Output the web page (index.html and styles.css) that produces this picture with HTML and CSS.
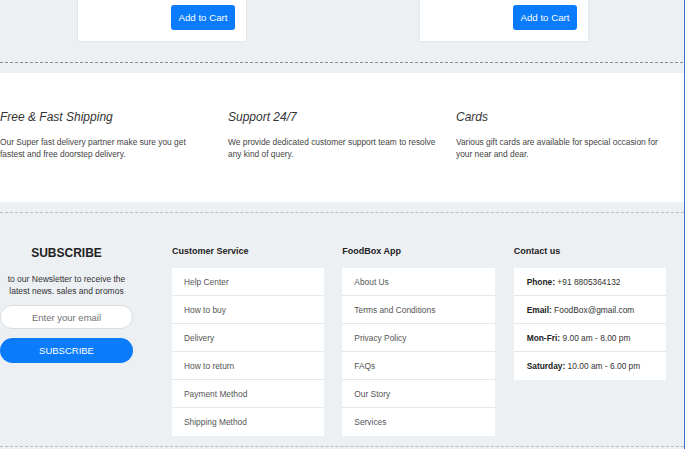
FILE: index.html
```html
<!DOCTYPE html>
<html lang="en">
<head>
<meta charset="utf-8">
<title>FoodBox</title>
<link rel="stylesheet" href="styles.css">
</head>
<body>
<div class="page">
  <section class="products">
    <div class="card"><button class="btn-cart">Add to Cart</button></div>
    <div class="card"><button class="btn-cart">Add to Cart</button></div>
  </section>
  <hr class="rule rule-dark">
  <section class="features">
    <div class="feature">
      <h3 class="feature-title">Free &amp; Fast Shipping</h3>
      <p class="feature-text">Our Super fast delivery partner make sure you get fastest and free doorstep delivery.</p>
    </div>
    <div class="feature">
      <h3 class="feature-title">Support 24/7</h3>
      <p class="feature-text">We provide dedicated customer support team to resolve any kind of query.</p>
    </div>
    <div class="feature">
      <h3 class="feature-title">Cards</h3>
      <p class="feature-text">Various gift cards are available for special occasion for your near and dear.</p>
    </div>
  </section>
  <hr class="rule rule-light">
  <footer class="footer">
    <div class="subscribe">
      <h2 class="subscribe-title">SUBSCRIBE</h2>
      <p class="subscribe-text">to our Newsletter to receive the latest news, sales and promos</p>
      <input class="subscribe-input" type="text" placeholder="Enter your email">
      <button class="subscribe-btn">SUBSCRIBE</button>
    </div>
    <div class="fcol">
      <h4 class="fcol-title">Customer Service</h4>
      <ul class="flist">
        <li>Help Center</li>
        <li>How to buy</li>
        <li>Delivery</li>
        <li>How to return</li>
        <li>Payment Method</li>
        <li>Shipping Method</li>
      </ul>
    </div>
    <div class="fcol">
      <h4 class="fcol-title">FoodBox App</h4>
      <ul class="flist">
        <li>About Us</li>
        <li>Terms and Conditions</li>
        <li>Privacy Policy</li>
        <li>FAQs</li>
        <li>Our Story</li>
        <li>Services</li>
      </ul>
    </div>
    <div class="fcol">
      <h4 class="fcol-title">Contact us</h4>
      <ul class="flist contact">
        <li><b>Phone:</b> +91 8805364132</li>
        <li><b>Email:</b> FoodBox@gmail.com</li>
        <li><b>Mon-Fri:</b> 9.00 am - 8.00 pm</li>
        <li><b>Saturday:</b> 10.00 am - 6.00 pm</li>
      </ul>
    </div>
  </footer>
  <hr class="rule rule-light">
</div>
</body>
</html>
```

FILE: styles.css
```css
* { box-sizing: border-box; }
html, body {
  margin: 0;
  padding: 0;
  background: #edf0f3;
  font-family: "Liberation Sans", Arial, sans-serif;
  color: #333;
}
.page {
  width: 685px;
  min-height: 449px;
  border-right: 1px solid #3a72c8;
  overflow: hidden;
}
.products {
  display: flex;
  gap: 172px;
  padding-left: 77px;
  height: 62px;
}
.card {
  width: 170px;
  height: 42px;
  background: #fff;
  border: 1px solid #e4e7ea;
  border-top: none;
  display: flex;
  justify-content: flex-end;
  align-items: flex-start;
  padding: 5px 11px 0 0;
}
.btn-cart {
  width: 64px;
  height: 25px;
  background: #0a7bfa;
  color: #fff;
  border: none;
  border-radius: 3px;
  font-family: "Liberation Sans", Arial, sans-serif;
  font-size: 9.7px;
  padding: 0;
}
.rule {
  margin: 0;
  border: none;
  height: 0;
}
.rule-dark {
  border-top: 1px dashed #8c8c8c;
  margin-bottom: 10px;
  margin-right: 1px;
}
.rule-light {
  border-top: 1px dashed #b9bdc2;
}
.features {
  background: #fff;
  height: 129px;
  display: grid;
  grid-template-columns: 228px 228px 228px;
  padding-top: 36px;
  margin-bottom: 10px;
}
.feature {
  padding-right: 17px;
}
.feature-title {
  margin: 0;
  font-size: 12px;
  line-height: 16px;
  font-style: italic;
  font-weight: normal;
  color: #333;
}
.feature-text {
  margin: 11px 0 0;
  font-size: 8.4px;
  line-height: 12px;
  color: #444;
}
.footer {
  display: flex;
  padding: 32px 0 10px 0;
}
.subscribe {
  width: 133px;
  margin-right: 39px;
  padding-top: 1px;
  display: flex;
  flex-direction: column;
  align-items: stretch;
  text-align: center;
}
.subscribe-title {
  margin: 0;
  font-size: 12px;
  line-height: 14px;
  font-weight: bold;
  color: #222;
}
.subscribe-text {
  margin: 13px 0 0;
  font-size: 8.5px;
  line-height: 12px;
  height: 21px;
  overflow: hidden;
  color: #333;
}
.subscribe-input {
  margin-top: 11px;
  height: 24px;
  border: 1px solid #d9dde1;
  border-radius: 12px;
  background: #fff;
  text-align: center;
  font-family: "Liberation Sans", Arial, sans-serif;
  font-size: 9.5px;
  padding: 0;
  outline: none;
}
.subscribe-input::placeholder { color: #707070; }
.subscribe-btn {
  margin-top: 9px;
  height: 25px;
  border: none;
  border-radius: 13px;
  background: #0a7bfa;
  color: #fff;
  font-family: "Liberation Sans", Arial, sans-serif;
  font-size: 9.5px;
  padding: 0;
}
.fcol {
  width: 153px;
  margin-right: 18px;
}
.fcol:last-child { margin-left: 1px; }
.fcol-title {
  margin: 0 0 11px;
  font-size: 9px;
  line-height: 12px;
  font-weight: bold;
  color: #222;
}
.flist {
  list-style: none;
  margin: 0;
  padding: 0;
  background: #fff;
}
.flist li {
  height: 28px;
  line-height: 29px;
  padding-left: 12px;
  font-size: 8.4px;
  color: #555;
  border-bottom: 1px solid #e6e8eb;
}
.flist li:last-child { border-bottom: none; }
.contact li {
  padding-left: 13px;
  color: #333;
}
.contact b { color: #222; }
```
